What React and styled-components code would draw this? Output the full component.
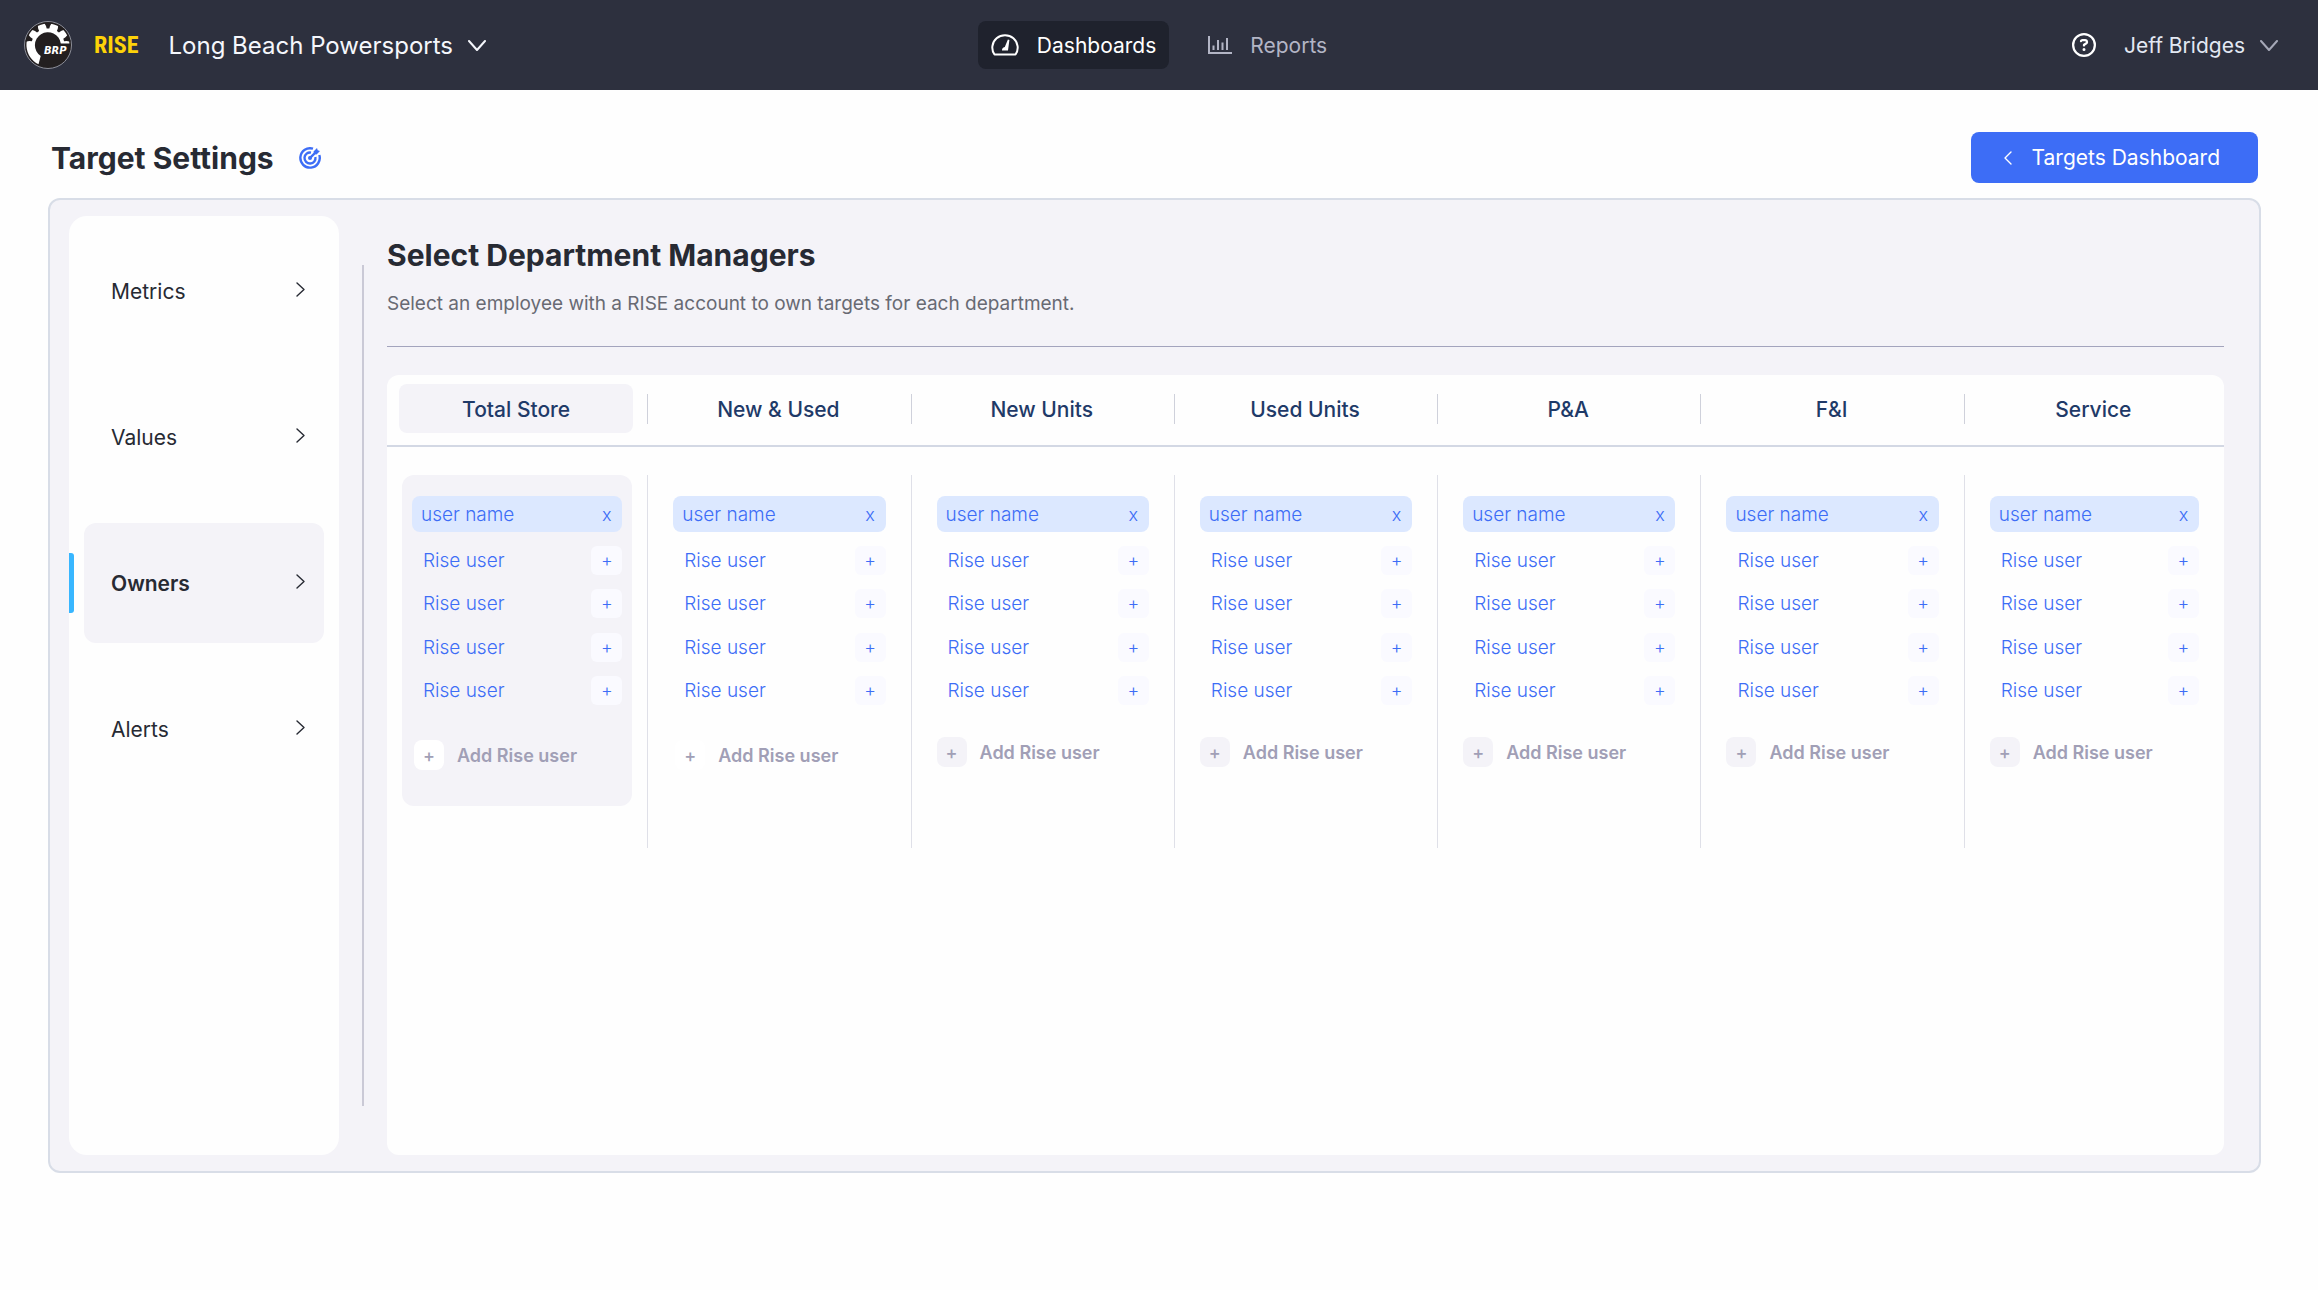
import React, { useState } from "react";
import styled, { createGlobalStyle } from "styled-components";
import { FaRegCircleQuestion } from "react-icons/fa6";

const departments = [
  { name: "Total Store", inset: true, addColor: "#ffffff" },
  { name: "New & Used", inset: true, addColor: "#ffffff" },
  { name: "New Units" },
  { name: "Used Units" },
  { name: "P&A" },
  { name: "F&I" },
  { name: "Service" },
];
const steps = ["Metrics", "Values", "Owners", "Alerts"];
const users = ["Rise user", "Rise user", "Rise user", "Rise user"];

const Chevron = ({ dir, width, height, stroke = 2 }) => {
  const paths = {
    down: `M1 1 L${width / 2} ${height - 1} L${width - 1} 1`,
    right: `M1 1 L${width - 1} ${height / 2} L1 ${height - 1}`,
    left: `M${width - 1} 1 L1 ${height / 2} L${width - 1} ${height - 1}`,
  };
  return (
    <svg width={width} height={height} fill="none" aria-hidden="true">
      <path
        d={paths[dir]}
        stroke="currentColor"
        strokeWidth={stroke}
        strokeLinecap="round"
        strokeLinejoin="round"
      />
    </svg>
  );
};

const GearLogo = () => (
  <svg width="48" height="48" viewBox="0 0 48 48" aria-hidden="true">
    <circle cx="24" cy="24" r="23.5" fill="#231f20" stroke="#8d8f99" />
    <path
      d="M14.5 43.3 A21.5 21.5 0 1 1 45.4 22.5 L36.8 22.5 A13 13 0 1 0 16.7 35 Z"
      fill="#fff"
    />
    {[-72, -37, 0, 37, 72].map((angle) => (
      <path
        key={angle}
        d="M20 1.5 L28 1.5 L26 5 L25.3 7.5 L22.7 7.5 L22 5 Z"
        fill="#231f20"
        transform={`rotate(${angle} 24 24)`}
      />
    ))}
    <text
      x="20"
      y="33"
      fill="#fff"
      fontFamily="DejaVu Sans, sans-serif"
      fontSize="10"
      fontWeight="700"
      fontStyle="italic"
    >
      BRP
    </text>
  </svg>
);

const GaugeIcon = () => (
  <svg width="28" height="22" viewBox="0 0 28 22" fill="none" aria-hidden="true">
    <path
      d="M3.5 20.5 A12.7 12.3 0 1 1 24.5 20.5 Z"
      stroke="currentColor"
      strokeWidth="2"
      strokeLinejoin="round"
    />
    <path
      d="M16.9 5.6 L18.4 6 L17 16.5 L11 16.5 Q10.8 13.8 13.8 13 Z"
      fill="currentColor"
    />
  </svg>
);

const ChartIcon = () => (
  <svg width="24" height="20" viewBox="0 0 24 20" fill="none" aria-hidden="true">
    <path
      d="M1 1 V18 H24 M5.5 10.5 V15 M10 5 V15 M14.5 7.5 V15 M19 3 V15"
      stroke="currentColor"
      strokeWidth="2"
    />
  </svg>
);

const TargetIcon = () => (
  <svg width="22" height="22" viewBox="0 0 22 22" fill="none" aria-hidden="true">
    <g stroke="#3d6df6" strokeWidth="2.4">
      <path d="M14 1.7 A9.7 9.7 0 1 0 20.3 8" />
      <path d="M12 5.6 A5.5 5.5 0 1 0 16.4 10" />
      <path d="M10.8 11.2 L17 5" />
    </g>
    <circle cx="11" cy="11" r="2" fill="#3d6df6" />
    <path d="M14.5 4.5 L18 1 L18.7 3.3 L21 4 L17.5 7.5 L15 7 Z" fill="#3d6df6" />
  </svg>
);

export const App = () => {
  const [step, setStep] = useState("Owners");
  const [department, setDepartment] = useState("Total Store");

  return (
    <Page>
      <GlobalStyle />
      <TopBar>
        <Brand>
          <GearLogo />
          <Rise>RISE</Rise>
          <StoreButton>
            Long Beach Powersports
            <Chevron dir="down" width={18} height={11} />
          </StoreButton>
        </Brand>
        <Nav>
          <NavLink href="#dashboards" $active>
            <GaugeIcon />
            Dashboards
          </NavLink>
          <NavLink href="#reports">
            <ChartIcon />
            Reports
          </NavLink>
        </Nav>
        <Account>
          <HelpButton aria-label="Help">
            <FaRegCircleQuestion size={24} />
          </HelpButton>
          <UserButton>
            Jeff Bridges
            <Chevron dir="down" width={18} height={11} />
          </UserButton>
        </Account>
      </TopBar>
      <Main>
        <TitleRow>
          <Title>Target Settings</Title>
          <TargetIcon />
          <BackLink href="#targets">
            <Chevron dir="left" width={8} height={14} stroke={1.4} />
            Targets Dashboard
          </BackLink>
        </TitleRow>
        <Panel>
          <Sidebar>
            {steps.map((name) => (
              <Step key={name}>
                <Marker $active={name === step} />
                <StepButton $active={name === step} onClick={() => setStep(name)}>
                  {name}
                  <Chevron dir="right" width={9} height={15} stroke={1.4} />
                </StepButton>
              </Step>
            ))}
          </Sidebar>
          <Divider />
          <Content>
            <Heading>Select Department Managers</Heading>
            <Description>
              Select an employee with a RISE account to own targets for each department.
            </Description>
            <Rule />
            <Card>
              <Tabs>
                {departments.map(({ name }) => (
                  <TabCell key={name}>
                    <Tab
                      $active={name === department}
                      onClick={() => setDepartment(name)}
                    >
                      {name}
                    </Tab>
                  </TabCell>
                ))}
              </Tabs>
              <Columns>
                {departments.map(({ name, inset, addColor }) => (
                  <Column key={name}>
                    <ColumnBody $active={name === department}>
                      <Owner>
                        user name
                        <SmallButton aria-label="Remove owner">x</SmallButton>
                      </Owner>
                      <UserList>
                        {users.map((user, i) => (
                          <User key={i}>
                            {user}
                            <SmallButton $boxed aria-label="Select user">
                              +
                            </SmallButton>
                          </User>
                        ))}
                      </UserList>
                      <AddButton $inset={inset}>
                        <AddBox $color={addColor}>+</AddBox>
                        Add Rise user
                      </AddButton>
                    </ColumnBody>
                  </Column>
                ))}
              </Columns>
            </Card>
          </Content>
        </Panel>
      </Main>
    </Page>
  );
};

const GlobalStyle = createGlobalStyle`
  * {
    box-sizing: border-box;
  }
  body {
    margin: 0;
    background: #fefefe;
    font-family: Inter, "Liberation Sans", sans-serif;
  }
  button {
    padding: 0;
    border: none;
    background: none;
    font: inherit;
    color: inherit;
    cursor: pointer;
  }
  a {
    text-decoration: none;
  }
  svg {
    flex-shrink: 0;
  }
`;
const Page = styled.div`
  min-height: 100vh;
  display: flex;
  flex-direction: column;
`;
const TopBar = styled.header`
  height: 90px;
  padding: 0 24px;
  display: grid;
  grid-template-columns: 1fr auto 1fr;
  align-items: center;
  background: #2d303e;
`;
const Brand = styled.div`
  display: flex;
  align-items: center;
  gap: 22px;
`;
const Rise = styled.span`
  color: #fdd208;
  font-family: "Roboto Condensed", Lato, sans-serif;
  font-size: 24px;
  font-weight: 700;
`;
const StoreButton = styled.button`
  && {
    margin-left: 8px;
    display: flex;
    align-items: center;
    gap: 15px;
    color: #f5f7fc;
    font-size: 24px;
  }
`;
const Nav = styled.nav`
  display: flex;
  gap: 26px;
`;
const NavLink = styled.a`
  height: 48px;
  padding: 0 13px;
  display: flex;
  align-items: center;
  gap: 18px;
  border-radius: 8px;
  background: ${({ $active }) => ($active ? "#1f222d" : "transparent")};
  color: ${({ $active }) => ($active ? "#ffffff" : "#b3b5c5")};
  font-size: 21px;
`;
const Account = styled.div`
  padding-right: 16px;
  display: flex;
  align-items: center;
  justify-content: flex-end;
  gap: 28px;
`;
const HelpButton = styled.button`
  && {
    display: flex;
    color: #ffffff;
  }
`;
const UserButton = styled.button`
  && {
    display: flex;
    align-items: center;
    gap: 15px;
    color: #e3e8f3;
    font-size: 21px;
  }
  svg {
    color: #a5a8b7;
  }
`;
const Main = styled.main`
  flex: 1;
  padding: 42px 57px 117px 48px;
  display: flex;
  flex-direction: column;
`;
const TitleRow = styled.div`
  margin-bottom: 15px;
  padding: 0 3px;
  display: flex;
  align-items: center;
  gap: 25px;
`;
const Title = styled.h1`
  margin: 0;
  color: #272a33;
  font-size: 30px;
  font-weight: 700;
`;
const BackLink = styled.a`
  height: 51px;
  margin-left: auto;
  padding: 0 38px 0 33px;
  display: flex;
  align-items: center;
  gap: 20px;
  border-radius: 8px;
  background: #3d6df6;
  color: #ffffff;
  font-size: 21px;
`;
const Panel = styled.section`
  flex: 1;
  padding: 16px 35px 16px 19px;
  display: flex;
  gap: 23px;
  border: 2px solid #d8dde7;
  border-radius: 12px;
  background: #f4f3f8;
`;
const Sidebar = styled.nav`
  width: 270px;
  padding: 15px 0;
  display: flex;
  flex-direction: column;
  gap: 26px;
  border-radius: 18px;
  background: #fefefe;
`;
const Step = styled.div`
  padding-right: 15px;
  display: flex;
  align-items: center;
  gap: 10px;
`;
const Marker = styled.span`
  width: 5px;
  height: 60px;
  border-radius: 0 3px 3px 0;
  background: ${({ $active }) => ($active ? "#38b6ff" : "transparent")};
`;
const StepButton = styled.button`
  && {
    flex: 1;
    height: 120px;
    padding: 0 19px 0 27px;
    display: flex;
    align-items: center;
    justify-content: space-between;
    border-radius: 12px;
    background: ${({ $active }) => ($active ? "#f4f3f8" : "transparent")};
    color: #272a33;
    font-size: 21px;
    font-weight: ${({ $active }) => ($active ? 600 : 400)};
  }
  svg {
    margin-bottom: 4px;
  }
`;
const Divider = styled.div`
  width: 2px;
  margin: 49px 0;
  background: #cac9d6;
`;
const Content = styled.div`
  flex: 1;
  min-width: 0;
  padding-top: 19px;
  display: flex;
  flex-direction: column;
`;
const Heading = styled.h2`
  margin: 0 0 15px;
  color: #272a33;
  font-size: 30px;
  font-weight: 700;
  line-height: 40px;
`;
const Description = styled.p`
  margin: 0;
  color: #686a73;
  font-size: 19px;
  line-height: 28px;
`;
const Rule = styled.hr`
  width: 100%;
  margin: 28px 0;
  border: none;
  border-top: 1px solid #a3a4bd;
`;
const Card = styled.div`
  flex: 1;
  border-radius: 12px;
  background: #fefefe;
`;
const Tabs = styled.div`
  padding: 9px 0 12px;
  display: grid;
  grid-template-columns: 260fr repeat(5, 263fr) 260fr;
  align-items: center;
  border-bottom: 2px solid #d3d8e4;
`;
const TabCell = styled.div`
  height: 49px;
  display: flex;
  align-items: center;
  & + &::before {
    content: "";
    width: 1px;
    height: 30px;
    background: #cfd1db;
  }
`;
const Tab = styled.button`
  && {
    flex: 1;
    height: 49px;
    margin: 0 14px 0 12px;
    padding-top: 2px;
    border-radius: 8px;
    background: ${({ $active }) => ($active ? "#f4f3f8" : "transparent")};
    color: #1f3a68;
    font-size: 21px;
    font-weight: 500;
  }
`;
const Columns = styled.div`
  margin-top: 28px;
  display: grid;
  grid-template-columns: 260fr repeat(5, 263fr) 260fr;
`;
const Column = styled.div`
  padding: 0 15px 42px;
  & + & {
    border-left: 1px solid #dfe0e8;
  }
`;
const ColumnBody = styled.div`
  min-height: 331px;
  padding: 21px 10px;
  border-radius: 12px;
  background: ${({ $active }) => ($active ? "#f4f3f8" : "transparent")};
  color: #3d6df6;
  font-size: 19px;
  font-weight: 300;
`;
const Owner = styled.div`
  height: 36px;
  padding-left: 9px;
  display: flex;
  align-items: center;
  justify-content: space-between;
  border-radius: 8px;
  background: #dce8ff;
`;
const UserList = styled.ul`
  height: 159px;
  margin: 14px 0 32px;
  padding: 0 0 0 11px;
  display: flex;
  flex-direction: column;
  justify-content: space-between;
  list-style: none;
`;
const User = styled.li`
  display: flex;
  align-items: center;
  justify-content: space-between;
`;
const SmallButton = styled.button`
  && {
    width: 31px;
    height: 29px;
    border-radius: 6px;
    background: ${({ $boxed }) => ($boxed ? "#fafaff" : "transparent")};
    font-size: 18px;
  }
`;
const AddButton = styled.button`
  && {
    padding: ${({ $inset }) => ($inset ? "3px 0 0 2px" : "0")};
    display: flex;
    align-items: center;
    gap: 13px;
    color: #a19fb6;
    font-size: 18px;
    font-weight: 600;
  }
`;
const AddBox = styled.span`
  width: 30px;
  height: 30px;
  display: grid;
  place-items: center;
  border-radius: 8px;
  background: ${({ $color }) => $color || "#f4f3f8"};
  font-weight: 500;
`;

export default App;
